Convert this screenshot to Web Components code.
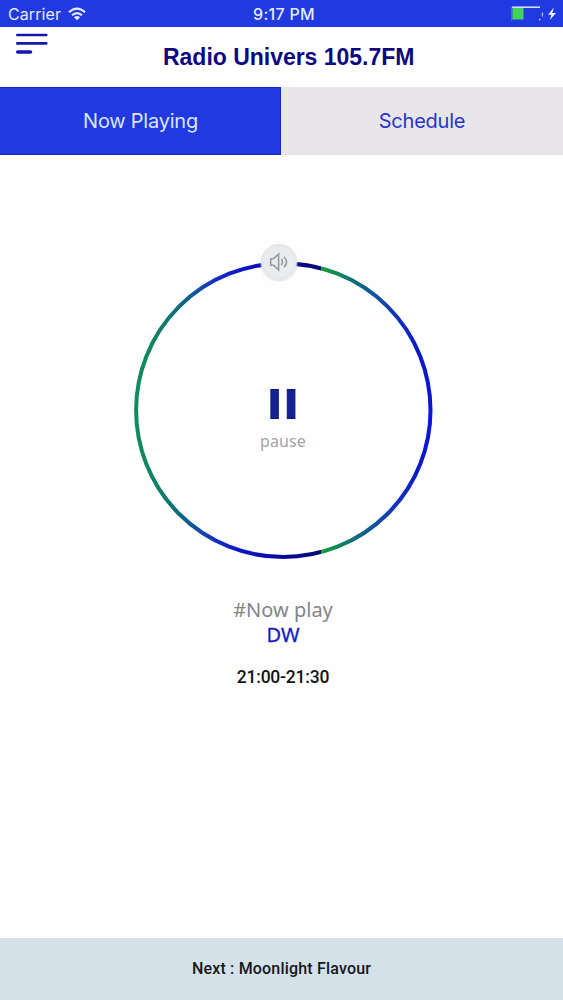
<!DOCTYPE html>
<html lang="en">
<head>
<meta charset="utf-8">
<title>Radio Univers 105.7FM</title>
<style>
    html, body {
        margin: 0;
        height: 100%;
        background: #fefefe;
    }
</style>
</head>
<body>
<radio-app></radio-app>

<script>
"use strict";

function define(name, html) {
    const tmpl = document.createElement("template");
    tmpl.innerHTML = html;
    customElements.define(name, class extends HTMLElement {
        constructor() {
            super();
            this.attachShadow({ mode: "open" }).appendChild(tmpl.content.cloneNode(true));
        }
    });
}

define("status-bar", `
    <style>
        :host {
            display: grid;
            grid-template-columns: 1fr auto 1fr;
            align-items: center;
            height: 27px;
            padding: 0 6px 0 8px;
            background: #2139e1;
            color: #e6ebff;
            font: 16px/27px Inter, sans-serif;
        }
        .left { display: flex; align-items: center; gap: 7px; }
        .carrier { letter-spacing: 0.1px; padding-top: 1px; }
        .time { font-weight: 500; letter-spacing: 0.3px; padding: 1px 0 0 3px; }
        .battery { justify-self: end; margin-bottom: 1px; }
        svg { display: block; }
    </style>
    <div class="left">
        <span class="carrier"><slot></slot></span>
        <svg width="18" height="14" viewBox="0 0 18 14" fill="none" stroke="#e6ebff" stroke-width="2.1">
            <path d="M1 5.2Q9 -2 17 5.2M4 8.3Q9 3.8 14 8.3" />
            <path d="M9 13.2L5.9 10.3Q9 7.8 12.1 10.3Z" fill="#e6ebff" stroke="none" />
        </svg>
    </div>
    <span class="time"><slot name="time"></slot></span>
    <svg class="battery" width="46" height="16" viewBox="0 0 46 16">
        <path d="M1 1.2H29" stroke="#dfe6ff" stroke-width="1.5" />
        <path d="M.8 1V13.5L0 15" stroke="#7180ee" stroke-width=".8" fill="none" />
        <rect x="1.5" y="2" width="11" height="11.5" fill="#43d457" />
        <path d="M28 14.3L29.4 13.1M31 6.5Q32.5 8.5 31 10.5" stroke="#b4beff" stroke-width="1.3" fill="none" />
        <path d="M42.8 1.5L37 8.8H40.4L38.8 14L45 6.9H41.3Z" fill="#f3f6ff" />
    </svg>
`);

define("app-header", `
    <style>
        :host {
            display: grid;
            grid-template-columns: 148px 1fr;
            height: 60px;
            background: #fff;
        }
        svg { display: block; margin: 6px 0 0 15px; }
        h1 {
            margin: 0;
            padding: 0 0 0 15px;
            color: #0d0783;
            font: bold 23px/61px "Liberation Sans", sans-serif;
            letter-spacing: -0.02px;
            white-space: nowrap;
        }
    </style>
    <svg width="33" height="22" viewBox="0 0 33 22" stroke="#1717ad" stroke-linecap="round">
        <path d="M2.3 2H31.3" stroke-width="2.6" />
        <path d="M2.3 10.4H31.3" stroke-width="2.6" />
        <path d="M2.7 19H15.5" stroke-width="3.5" />
    </svg>
    <h1><slot></slot></h1>
`);

define("tab-button", `
    <style>
        :host {
            display: block;
            flex: 1 1 0;
            height: 68px;
            background: #e8e6e9;
            color: #2735c8;
            font: 20px/69px Inter, sans-serif;
            letter-spacing: -0.23px;
            text-align: center;
        }
        :host([active]) {
            flex: 0 0 281px;
            background: #2139e1;
            color: #dce5ff;
            box-shadow: inset 0 1px #1526c4, inset 0 -1px #1526c4, inset -1px 0 #1526c4;
        }
    </style>
    <slot></slot>
`);

define("volume-knob", `
    <style>
        :host {
            display: block;
            width: 36px;
            height: 36px;
            border-radius: 50%;
            background: radial-gradient(circle, #ebecee 55%, #e3e4e6 72%);
            box-shadow: 0 1px 2px #ddd;
        }
        svg { display: block; }
    </style>
    <svg width="36" height="36" viewBox="0 0 36 36" fill="none" stroke="#969ba1" stroke-width="1.6">
        <path d="M9.7 14.7H12.6L17.6 10V26L12.6 21.3H9.7Z" />
        <path d="M20.3 15Q22.7 18 20.3 21M23 12.7Q28.2 18 23 23.3" />
    </svg>
`);

define("volume-dial", `
    <style>
        :host {
            display: grid;
            position: relative;
            width: 300px;
            height: 298px;
        }
        .ring, .control { grid-area: 1 / 1; }
        .control {
            display: flex;
            flex-direction: column;
            align-items: center;
            padding: 127px 2px 0 0;
        }
        .control svg { display: block; }
        .label {
            margin-top: 10px;
            color: #a4a4a4;
            font: 16px/24px "Noto Sans", sans-serif;
            letter-spacing: 0.1px;
        }
        /* the knob rides on top of the ring */
        volume-knob {
            position: absolute;
            left: 127px;
            top: -18px;
        }
    </style>
    <svg class="ring" width="300" height="298" viewBox="0 0 300 298">
        <defs>
            <linearGradient id="sweep" gradientUnits="userSpaceOnUse" x1="0" x2="300" y1="0" y2="0">
                <stop offset="0" stop-color="#0e8d5c" />
                <stop offset=".08" stop-color="#108065" />
                <stop offset=".16" stop-color="#0c6980" />
                <stop offset=".21" stop-color="#1150a0" />
                <stop offset=".27" stop-color="#142fc0" />
                <stop offset=".36" stop-color="#0b15c8" />
                <stop offset=".5" stop-color="#08089c" />
                <stop offset=".622" stop-color="#0a0a74" />
                <stop offset=".624" stop-color="#159e3e" />
                <stop offset=".7" stop-color="#117e64" />
                <stop offset=".79" stop-color="#105898" />
                <stop offset=".87" stop-color="#1234bb" />
                <stop offset=".95" stop-color="#0c18c8" />
                <stop offset="1" stop-color="#0b15dc" />
            </linearGradient>
        </defs>
        <ellipse cx="149.3" cy="148.2" rx="147.2" ry="146.8" fill="none" stroke="url(#sweep)" stroke-width="4" />
    </svg>
    <div class="control">
        <svg width="26" height="30" viewBox="0 0 26 30" fill="#152294" stroke="#0c1478">
            <rect x=".9" y=".5" width="7.4" height="29" />
            <rect x="17.3" y=".5" width="7.6" height="29" />
        </svg>
        <span class="label"><slot></slot></span>
    </div>
    <volume-knob></volume-knob>
`);

define("track-info", `
    <style>
        :host {
            display: flex;
            flex-direction: column;
            align-items: center;
            font-family: "Noto Sans", sans-serif;
        }
        .tag { color: #858585; font-size: 20px; line-height: 26px; }
        .show { color: #151dc2; font-size: 20px; line-height: 24px; -webkit-text-stroke: 0.3px #151dc2; }
        .hours {
            margin-top: 17px;
            color: #141414;
            font: 500 17.5px/26px Roboto, sans-serif;
            letter-spacing: -0.2px;
        }
    </style>
    <span class="tag"><slot name="tag"></slot></span>
    <span class="show"><slot name="show"></slot></span>
    <span class="hours"><slot name="hours"></slot></span>
`);

define("next-bar", `
    <style>
        :host {
            display: block;
            height: 62px;
            background: #d5e1e9;
            color: #14181c;
            font: 500 16px/62px Roboto, sans-serif;
            letter-spacing: 0.18px;
            text-align: center;
        }
    </style>
    <slot></slot>
`);

define("radio-app", `
    <style>
        :host {
            display: flex;
            flex-direction: column;
            height: 100vh;
        }
        nav { display: flex; }
        main {
            flex: 1;
            display: flex;
            flex-direction: column;
            align-items: center;
            padding-top: 107px;
        }
        volume-dial { margin-left: 5px; }
        track-info { margin-top: 37px; margin-left: 3px; }
    </style>
    <status-bar>Carrier<span slot="time">9:17 PM</span></status-bar>
    <app-header>Radio Univers 105.7FM</app-header>
    <nav>
        <tab-button active>Now Playing</tab-button>
        <tab-button>Schedule</tab-button>
    </nav>
    <main>
        <volume-dial>pause</volume-dial>
        <track-info>
            <span slot="tag">#Now play</span>
            <span slot="show">DW</span>
            <span slot="hours">21:00-21:30</span>
        </track-info>
    </main>
    <next-bar>Next : Moonlight Flavour</next-bar>
`);
</script>
</body>
</html>
